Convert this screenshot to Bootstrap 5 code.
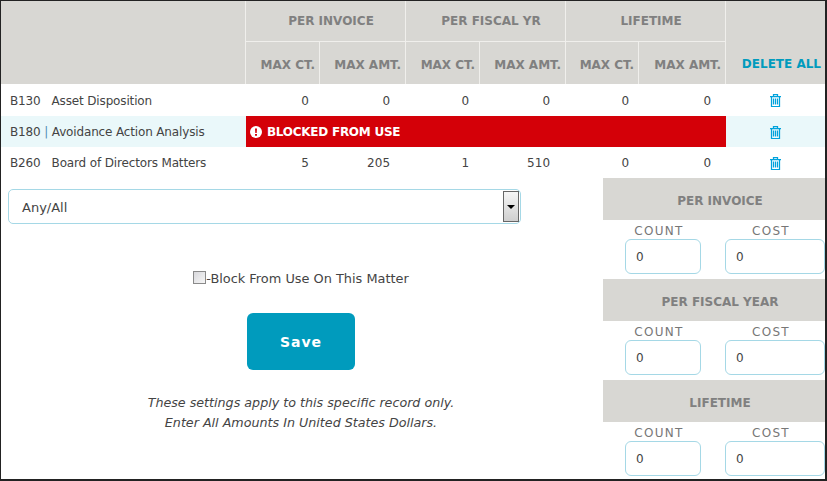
<!DOCTYPE html>
<html lang="en">
<head>
  <meta charset="UTF-8">
  <meta name="viewport" content="width=device-width, initial-scale=1">
  <title>Task Code Limits</title>
  <link href="https://cdn.jsdelivr.net/npm/bootstrap@5.3.2/dist/css/bootstrap.min.css" rel="stylesheet">
  <style>
    html, body { height: 100%; }
    body {
      font-family: "DejaVu Sans", sans-serif;
      font-size: 12px;
      color: #444;
      background: #fff;
      overflow: hidden;
    }
    .frame {
      width: 827px;
      height: 481px;
      border: solid #222;
      border-width: 1px 2px 2px 1px;
      overflow: hidden;
    }
    .limits-table { width: 824px; table-layout: fixed; margin: 0; border-collapse: separate; border-spacing: 0; }
    .limits-table th {
      background: #d8d7d3;
      color: #808080;
      font-size: 12px;
      font-weight: 700;
      text-align: center;
      border: 0;
      border-right: 1px solid #f0efec;
      padding: 0;
      vertical-align: middle;
    }
    .limits-table thead tr:first-child th { height: 41px; border-bottom: 1px solid #f0efec; padding-left: 11px; }
    .limits-table thead tr:last-child th { height: 42px; text-align: right; padding: 3px 4px 0 0; border-bottom: 0; }
    .limits-table thead tr:first-child th.blank { border-bottom: 0; padding: 0; }
    .limits-table thead tr:first-child th.del-head {
      color: #009bbd;
      border-right: 0;
      border-bottom: 0;
      text-align: right;
      padding: 0 4px 11px 0;
      vertical-align: bottom;
    }
    .limits-table td {
      padding: 1px 10px 0 0;
      text-align: right;
      border: 0;
      vertical-align: middle;
      color: #444;
      background: transparent;
      height: 31px;
    }
    .limits-table tbody tr:first-child td { height: 32px; }
    .limits-table td.amt-cell { padding-right: 15px; }
    .limits-table td.num-a { padding-right: 11px; }
    .limits-table td.num-b { padding-right: 16px; }
    .limits-table td.code-cell { text-align: left; padding: 1px 0 0 9px; white-space: nowrap; letter-spacing: -0.15px; }
    .limits-table td.trash-cell { text-align: center; padding: 0 0 1px 0; }
    .limits-table tr.tinted td { background: #eaf8fa; }
    .limits-table tr.tinted td.blocked-cell {
      background: #d40008;
      color: #fff;
      font-weight: 700;
      text-align: left;
      padding: 1px 0 0 4px;
      letter-spacing: -0.25px;
    }
    .blocked-cell svg { vertical-align: -2px; margin-right: 1px; }
    .trash-icon { fill: none; stroke: #00a2dc; stroke-width: 1.25; }
    .gap-code { margin-right: 11px; }
    .code-pipe { color: #4f8db5; }
    .left-pane { width: 602px; }
    .right-pane { width: 222px; }
    .any-select {
      width: 513px;
      height: 35px;
      margin: 11px 0 0 7px;
      border: 1px solid #a5d8e6;
      border-radius: 5px;
      padding-left: 13px;
      font-size: 13px;
    }
    .any-select > span:first-child { padding-top: 2px; }
    .select-arrow {
      width: 16px;
      height: 31px;
      margin-right: 1px;
      border: 1px solid #666;
      background: linear-gradient(#f6f6f6, #cfcfcf);
    }
    .select-arrow::after {
      content: "";
      border-left: 4px solid transparent;
      border-right: 4px solid transparent;
      border-top: 4px solid #000;
    }
    .block-line { margin-top: 45px; padding-right: 2px; font-size: 12.9px; }
    .fake-check {
      width: 13px;
      height: 13px;
      margin-bottom: 3px;
      border: 1px solid #8a8a8a;
      background: linear-gradient(135deg, #d8d8dc, #f6f6f6);
    }
    .save-btn {
      width: 108px;
      height: 57px;
      margin: 25px 2px 0 0;
      padding-top: 8px;
      background: #009bbd;
      border: 0;
      border-radius: 6px;
      color: #fff;
      font-size: 14px;
      font-weight: 700;
      letter-spacing: 1px;
    }
    .save-btn:hover { background: #008aa8; color: #fff; }
    .apply-note { margin-top: 23px; font-style: italic; font-size: 12.7px; line-height: 20px; padding-right: 2px; }
    .limit-head {
      height: 42px;
      padding: 3px 0 0 12px;
      background: #d8d7d3;
      color: #808080;
      font-weight: 700;
    }
    .limit-fields { height: 59px; padding-left: 22px; }
    .count-field { width: 76px; margin-right: 24px; }
    .cost-field { width: 100px; }
    .limit-fields label {
      display: block;
      text-align: center;
      color: #777;
      letter-spacing: 1.3px;
      line-height: 13px;
      margin: 5px 0 1px;
      padding-right: 8px;
      font-size: 12px;
    }
    .limit-fields input {
      width: 100%;
      height: 35px;
      padding: 0 10px;
      font-size: 12px;
      color: #444;
      border: 1px solid #a5d8e6;
      border-radius: 6px;
    }
  </style>
</head>
<body>
  <div class="frame">
    <table class="table limits-table">
      <colgroup>
        <col style="width:245px"><col style="width:74px"><col style="width:86px"><col style="width:74px">
        <col style="width:86px"><col style="width:73px"><col style="width:87px"><col>
      </colgroup>
      <thead>
        <tr>
          <th rowspan="2" class="blank"></th>
          <th colspan="2">PER INVOICE</th>
          <th colspan="2">PER FISCAL YR</th>
          <th colspan="2">LIFETIME</th>
          <th rowspan="2" class="del-head">DELETE ALL</th>
        </tr>
        <tr>
          <th>MAX CT.</th><th>MAX AMT.</th>
          <th>MAX CT.</th><th>MAX AMT.</th>
          <th>MAX CT.</th><th>MAX AMT.</th>
        </tr>
      </thead>
      <tbody>
        <tr>
          <td class="code-cell"><span class="gap-code">B130</span>Asset Disposition</td>
          <td class="num-a">0</td><td class="num-b">0</td><td class="num-a">0</td><td class="num-b">0</td><td>0</td><td class="amt-cell">0</td>
          <td class="trash-cell"><svg width="13" height="14" viewBox="0 0 13 14"><path class="trash-icon" d="M1 3.5h11M4.5 3.5V1.5h4v2M2.5 3.5V13.5h8V3.5M4.5 5.5v6M6.5 5.5v6M8.5 5.5v6"/></svg></td>
        </tr>
        <tr class="tinted">
          <td class="code-cell">B180 <span class="code-pipe">|</span> Avoidance Action Analysis</td>
          <td colspan="6" class="blocked-cell">
            <svg width="12" height="12" viewBox="0 0 12 12"><circle cx="6" cy="6" r="6" fill="#fff"/><path d="M5 2.5h2L6.7 7H5.3zM5 8h2v1.7H5z" fill="#d40008"/></svg>
            BLOCKED FROM USE
          </td>
          <td class="trash-cell"><svg width="13" height="14" viewBox="0 0 13 14"><path class="trash-icon" d="M1 3.5h11M4.5 3.5V1.5h4v2M2.5 3.5V13.5h8V3.5M4.5 5.5v6M6.5 5.5v6M8.5 5.5v6"/></svg></td>
        </tr>
        <tr>
          <td class="code-cell"><span class="gap-code">B260</span>Board of Directors Matters</td>
          <td class="num-a">5</td><td class="num-b">205</td><td class="num-a">1</td><td class="num-b">510</td><td>0</td><td class="amt-cell">0</td>
          <td class="trash-cell"><svg width="13" height="14" viewBox="0 0 13 14"><path class="trash-icon" d="M1 3.5h11M4.5 3.5V1.5h4v2M2.5 3.5V13.5h8V3.5M4.5 5.5v6M6.5 5.5v6M8.5 5.5v6"/></svg></td>
        </tr>
      </tbody>
    </table>

    <div class="d-flex">
      <div class="left-pane text-center">
        <div class="any-select d-flex align-items-center justify-content-between text-start">
          <span>Any/All</span>
          <span class="select-arrow d-flex align-items-center justify-content-center"></span>
        </div>
        <div class="block-line d-flex align-items-center justify-content-center">
          <span class="fake-check"></span><span>-Block From Use On This Matter</span>
        </div>
        <button type="button" class="btn save-btn">Save</button>
        <div class="apply-note">
          These settings apply to this specific record only.<br>
          Enter All Amounts In United States Dollars.
        </div>
      </div>

      <div class="right-pane">
        <div class="limit-head d-flex align-items-center justify-content-center">PER INVOICE</div>
        <div class="limit-fields d-flex">
          <div class="count-field"><label>COUNT</label><input class="d-block" type="text" value="0"></div>
          <div class="cost-field"><label>COST</label><input class="d-block" type="text" value="0"></div>
        </div>
        <div class="limit-head d-flex align-items-center justify-content-center">PER FISCAL YEAR</div>
        <div class="limit-fields d-flex">
          <div class="count-field"><label>COUNT</label><input class="d-block" type="text" value="0"></div>
          <div class="cost-field"><label>COST</label><input class="d-block" type="text" value="0"></div>
        </div>
        <div class="limit-head d-flex align-items-center justify-content-center">LIFETIME</div>
        <div class="limit-fields d-flex">
          <div class="count-field"><label>COUNT</label><input class="d-block" type="text" value="0"></div>
          <div class="cost-field"><label>COST</label><input class="d-block" type="text" value="0"></div>
        </div>
      </div>
    </div>
  </div>

  <script src="https://cdn.jsdelivr.net/npm/bootstrap@5.3.2/dist/js/bootstrap.bundle.min.js"></script>
</body>
</html>
